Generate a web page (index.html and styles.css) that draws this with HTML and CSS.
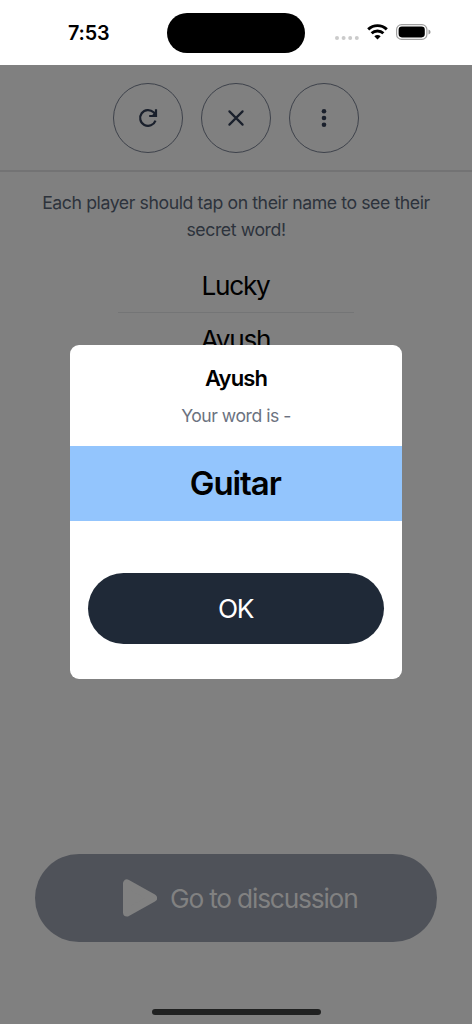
FILE: index.html
```html
<!DOCTYPE html>
<html lang="en">
<head>
<meta charset="utf-8">
<meta name="viewport" content="width=device-width, initial-scale=1">
<title>Secret word</title>
<link rel="stylesheet" href="styles.css">
</head>
<body>
<div class="phone">
  <header class="status">
    <span class="time">7:53</span>
    <span class="island"></span>
    <div class="indicators">
      <svg class="signal" width="24" height="4" viewBox="0 0 24 4" fill="#cbcbcb"><circle cx="2" cy="2" r="2"/><circle cx="8.6" cy="2" r="2"/><circle cx="15.2" cy="2" r="2"/><circle cx="21.8" cy="2" r="2"/></svg>
      <svg class="wifi" width="21" height="16" viewBox="0 0 21 16" fill="none" stroke="#000" stroke-width="2.9"><path d="M1.2 5.4Q5.2 1.6 10.5 1.6T19.8 5.4"/><path d="M4.6 9.2Q7 7 10.5 7T16.4 9.2"/><path d="M10.5 15.5 7.3 12.3Q10.5 9.7 13.7 12.3Z" fill="#000" stroke="none"/></svg>
      <svg class="battery" width="35" height="16" viewBox="0 0 35 16"><rect x=".6" y=".6" width="30.3" height="14.8" rx="5" fill="none" stroke="#a0a0a0" stroke-width="1.2"/><rect x="2.6" y="2.6" width="26.2" height="10.8" rx="3.3"/><path d="M32.5 5.4Q34.6 6.1 34.6 8T32.5 10.6Z" fill="#999"/></svg>
    </div>
  </header>
  <main class="screen">
    <nav class="toolbar">
      <button class="round" aria-label="Restart"><svg width="24" height="24" viewBox="0 0 24 24" fill="none" stroke="#1a202c" stroke-width="2.2"><path d="M19.5 14.6A7.9 7.9 0 1 1 17.6 6.3L19.9 8.6"/><path d="M20 3.2V10H13.2"/><path d="M20 5.2V10H15.2Z" fill="#1a202c" stroke="none"/></svg></button>
      <button class="round" aria-label="Close"><svg width="24" height="24" viewBox="0 0 24 24" stroke="#1a202c" stroke-width="2.2" stroke-linecap="round"><path d="M5.4 5.4 18.6 18.6M18.6 5.4 5.4 18.6"/></svg></button>
      <button class="round" aria-label="More"><svg width="24" height="24" viewBox="0 0 24 24" fill="#1a202c"><circle cx="12" cy="5.3" r="2.3"/><circle cx="12" cy="12" r="2.3"/><circle cx="12" cy="18.7" r="2.3"/></svg></button>
    </nav>
    <p class="hint">Each player should tap on their name to see their<br>secret word!</p>
    <ul class="players"><li>Lucky</li><li>Ayush</li></ul>
    <button class="discuss"><svg width="34" height="38" viewBox="0 0 34 38"><path d="M4 4.5V33.5L30 19Z" fill="#818181" stroke="#818181" stroke-width="8" stroke-linejoin="round"/></svg><span>Go to discussion</span></button>
    <div class="home"></div>
  </main>
  <section class="modal" role="dialog">
    <h1>Ayush</h1>
    <p class="label">Your word is -</p>
    <div class="word">Guitar</div>
    <button class="ok">OK</button>
  </section>
</div>
</body>
</html>
```
FILE: styles.css
```css
* { box-sizing: border-box; }
body { margin: 0; font-family: Inter, "Liberation Sans", sans-serif; }
button { font-family: inherit; padding: 0; border: 0; }
svg { display: block; flex: none; }
.phone { position: relative; width: 472px; height: 1024px; display: flex; flex-direction: column; background: #fff; overflow: hidden; }
.status { height: 65px; flex: none; display: grid; grid-template-columns: 167px 138px 167px; }
.time { padding: 21px 0 0 68px; font-size: 19.8px; line-height: 24px; font-weight: 600; letter-spacing: -.15px; }
.island { height: 40.5px; margin-top: 12.5px; border-radius: 21px; background: #000; }
.indicators { display: flex; align-items: flex-start; padding: 24px 0 0 30px; }
.signal { margin-top: 11.5px; }
.wifi { margin-left: 8px; }
.battery { margin-left: 8px; }
.screen { flex: 1; min-height: 0; display: flex; flex-direction: column; align-items: center; background: #808080; }
.toolbar { width: 100%; height: 107px; flex: none; display: flex; justify-content: center; gap: 17.6px; padding-top: 17.5px; border-bottom: 2px solid #737374; }
.round { width: 70.3px; height: 70.3px; border: 1.2px solid #3e424b; border-radius: 50%; background: transparent; display: flex; align-items: center; justify-content: center; }
.hint { margin: 16.5px 0 0; color: #2d333c; font-size: 17.7px; line-height: 27px; text-align: center; letter-spacing: -.42px; white-space: nowrap; }
.players { width: 236px; margin: 25px 0 0; padding: 0; list-style: none; text-align: center; font-size: 26.2px; line-height: 35px; letter-spacing: -1.25px; }
.players li { padding-right: 1px; }
.players li:first-child { height: 45.5px; border-bottom: 1px solid #747576; }
.players li + li { padding-top: 9px; }
.discuss { width: 401.4px; height: 88px; margin-top: auto; border-radius: 44px; background: #4f5259; color: #818181; display: flex; align-items: center; justify-content: center; gap: 13.5px; font-size: 26.3px; letter-spacing: -1.2px; padding-left: 8px; }
.home { width: 169px; height: 6px; margin: 67px 0 9px; border-radius: 3px; background: #202121; }
.modal { position: absolute; left: 70.3px; top: 345px; width: 331.4px; height: 334px; border-radius: 9px; background: #fff; display: flex; flex-direction: column; align-items: center; }
.modal h1 { margin: 18px 0 0; font-size: 22px; line-height: 31px; font-weight: 600; letter-spacing: -.85px; }
.label { margin: 9px 0 0; color: #6b7280; font-size: 17.6px; line-height: 26px; letter-spacing: -.48px; }
.word { width: 100%; height: 74.5px; margin-top: 17px; padding-right: 1.5px; background: #93c5fd; font-size: 33px; line-height: 74px; font-weight: 600; text-align: center; letter-spacing: -1.1px; }
.ok { width: 296px; height: 70.5px; margin-top: 52.5px; padding-right: 1px; border-radius: 36px; background: #1f2937; color: #fff; font-size: 26.3px; letter-spacing: -1.5px; }
```
